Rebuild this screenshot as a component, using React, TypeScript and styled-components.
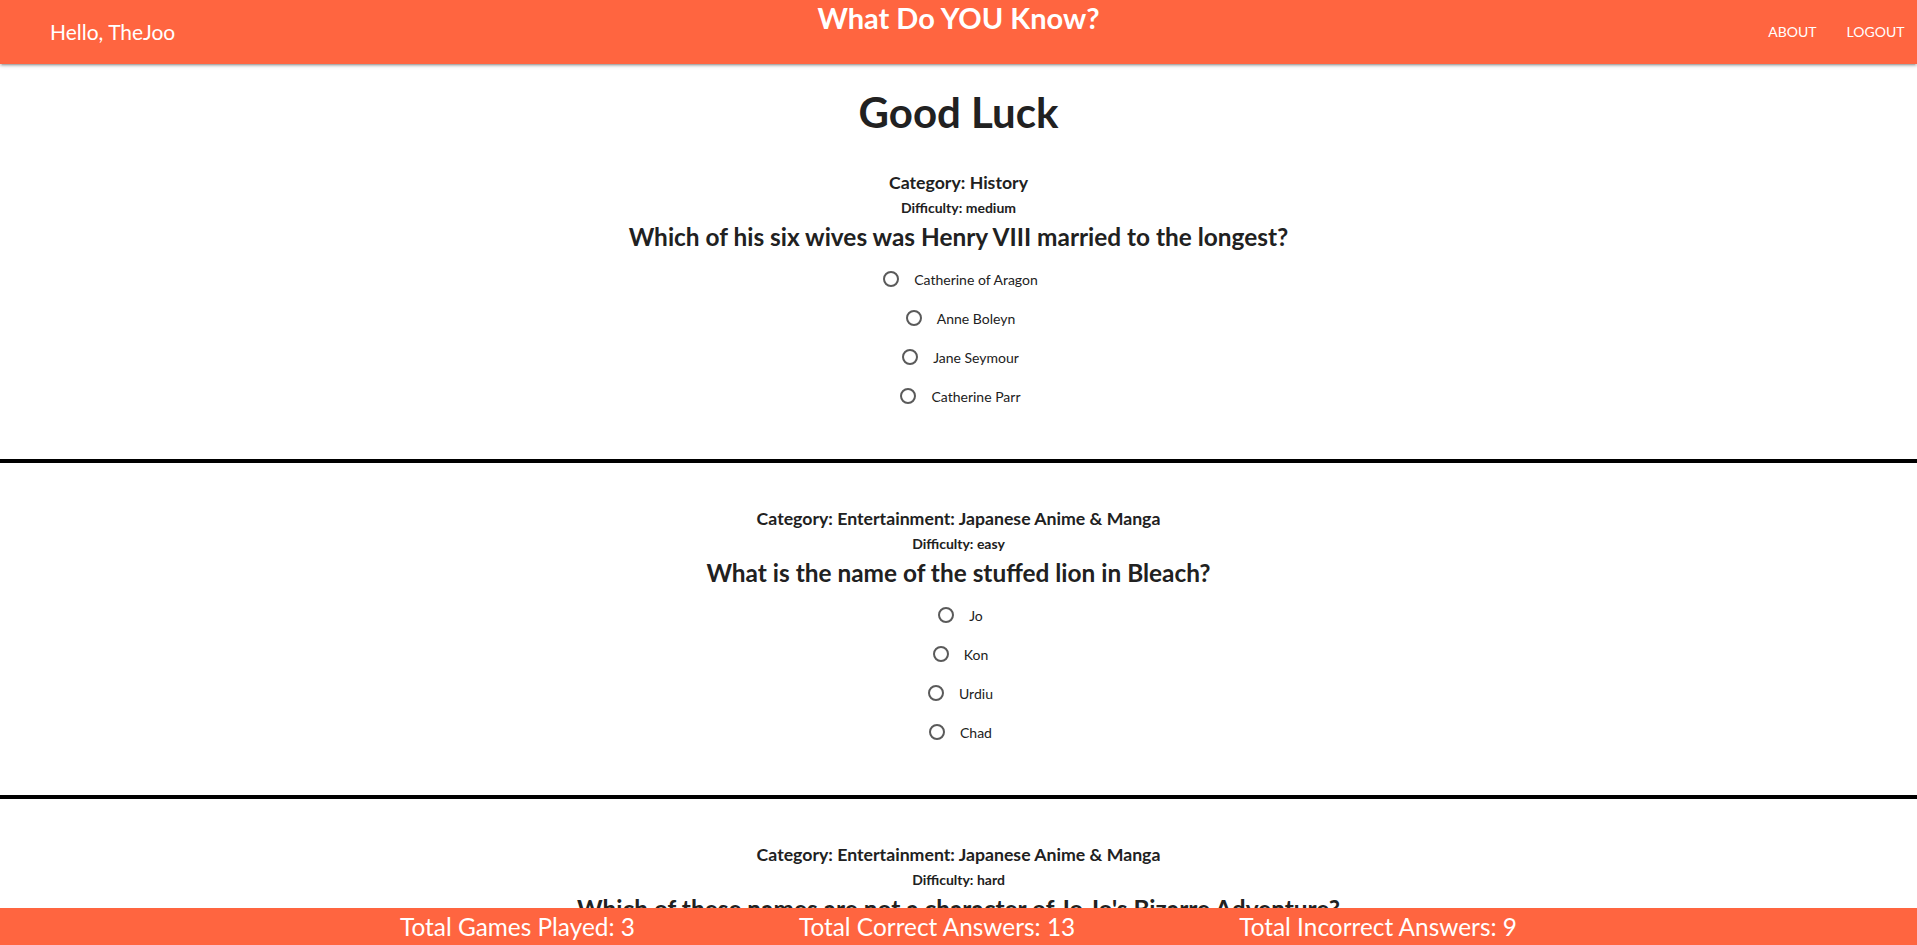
import React from "react";
import styled, { createGlobalStyle } from "styled-components";

const ORANGE = "#ff6540";

const GlobalStyle = createGlobalStyle`
  html, body { margin: 0; padding: 0; background: #ffffff; }
  html { scrollbar-width: none; }
  ::-webkit-scrollbar { display: none; }
  body {
    font-family: Lato, "Noto Sans", "Liberation Sans", sans-serif;
    color: rgba(0, 0, 0, 0.87);
    font-size: 15px;
  }
  * { box-sizing: border-box; }
`;

const Nav = styled.nav`
  position: sticky;
  top: 0;
  z-index: 5;
  height: 64px;
  background: ${ORANGE};
  color: #ffffff;
  display: grid;
  grid-template-columns: 1fr auto 1fr;
  box-shadow: 0 2px 2px 0 rgba(0, 0, 0, 0.14), 0 3px 1px -2px rgba(0, 0, 0, 0.12),
    0 1px 5px 0 rgba(0, 0, 0, 0.2);
`;

const Greeting = styled.div`
  padding-left: 50px;
  font-size: 21px;
  line-height: 64px;
  white-space: nowrap;
`;

const Brand = styled.div`
  font-size: 29px;
  font-weight: 700;
  line-height: 36px;
  align-self: start;
  white-space: nowrap;
`;

const NavLinks = styled.ul`
  list-style: none;
  margin: 0;
  padding: 0;
  display: flex;
  justify-content: flex-end;
`;

const NavLink = styled.a`
  display: block;
  padding: 0 12.5px 0 17.5px;
  font-size: 14px;
  line-height: 64px;
  color: #ffffff;
  text-decoration: none;
  text-transform: uppercase;
`;

const Main = styled.main`
  padding-top: 23px;
  padding-bottom: 37px;
  text-align: center;
`;

const Heading = styled.h1`
  margin: 0;
  font-size: 42px;
  line-height: 50px;
  font-weight: 700;
  color: #212121;
`;

const QuestionBlock = styled.section<{ $first?: boolean }>`
  padding-top: ${(p) => (p.$first ? 35 : 45)}px;
  padding-bottom: 50.5px;
  border-bottom: 4px solid #000000;
  display: flex;
  flex-direction: column;
  align-items: center;
`;

const Category = styled.h3`
  margin: 0;
  font-size: 17.7px;
  line-height: 22px;
  font-weight: 700;
  color: #212121;
`;

const Difficulty = styled.h5`
  margin: 5px 0 0;
  font-size: 14px;
  line-height: 18px;
  font-weight: 700;
  color: #212121;
`;

const Question = styled.h2`
  margin: 5px 0 0;
  font-size: 24.4px;
  line-height: 30px;
  font-weight: 700;
  color: #212121;
`;

const Options = styled.div`
  margin-top: 14.5px;
  display: flex;
  flex-direction: column;
  align-items: center;
  gap: 14px;
`;

const OptionRow = styled.label`
  display: flex;
  align-items: center;
  height: 25px;
  font-size: 14px;
  line-height: 25px;
  color: #212121;
  cursor: pointer;
`;

const Radio = styled.input.attrs({ type: "radio" })`
  appearance: none;
  -webkit-appearance: none;
  width: 16px;
  height: 16px;
  margin: 0 15px 0 4px;
  border: 2px solid #5a5a5a;
  border-radius: 50%;
  background: transparent;
  flex: none;
`;

const Footer = styled.footer`
  position: fixed;
  left: 0;
  right: 0;
  bottom: 0;
  z-index: 5;
  height: 37px;
  background: ${ORANGE};
  color: #ffffff;
  display: flex;
  justify-content: center;
  align-items: center;
  gap: 164px;
`;

const Stat = styled.span`
  font-size: 24.4px;
  line-height: 37px;
  white-space: nowrap;
`;

type Item = {
  category: string;
  difficulty: string;
  question: string;
  answers: string[];
};

const items: Item[] = [
  {
    category: "History",
    difficulty: "medium",
    question: "Which of his six wives was Henry VIII married to the longest?",
    answers: ["Catherine of Aragon", "Anne Boleyn", "Jane Seymour", "Catherine Parr"],
  },
  {
    category: "Entertainment: Japanese Anime & Manga",
    difficulty: "easy",
    question: "What is the name of the stuffed lion in Bleach?",
    answers: ["Jo", "Kon", "Urdiu", "Chad"],
  },
  {
    category: "Entertainment: Japanese Anime & Manga",
    difficulty: "hard",
    question: "Which of these names are not a character of Jo Jo's Bizarre Adventure?",
    answers: ["Josuke Higashikata", "Jotaro Kujo", "Joseph Joestar", "Jolyne Cujoh"],
  },
];

export default function App() {
  return (
    <>
      <GlobalStyle />
      <Nav>
        <Greeting>Hello, TheJoo</Greeting>
        <Brand>What Do YOU Know?</Brand>
        <NavLinks>
          <li>
            <NavLink href="#">About</NavLink>
          </li>
          <li>
            <NavLink href="#">Logout</NavLink>
          </li>
        </NavLinks>
      </Nav>
      <Main>
        <Heading>Good Luck</Heading>
        {items.map((item, i) => (
          <QuestionBlock key={i} $first={i === 0}>
            <Category>Category: {item.category}</Category>
            <Difficulty>Difficulty: {item.difficulty}</Difficulty>
            <Question>{item.question}</Question>
            <Options>
              {item.answers.map((a) => (
                <OptionRow key={a}>
                  <Radio name={`q${i}`} value={a} />
                  <span>{a}</span>
                </OptionRow>
              ))}
            </Options>
          </QuestionBlock>
        ))}
      </Main>
      <Footer>
        <Stat>Total Games Played: 3</Stat>
        <Stat>Total Correct Answers: 13</Stat>
        <Stat>Total Incorrect Answers: 9</Stat>
      </Footer>
    </>
  );
}
